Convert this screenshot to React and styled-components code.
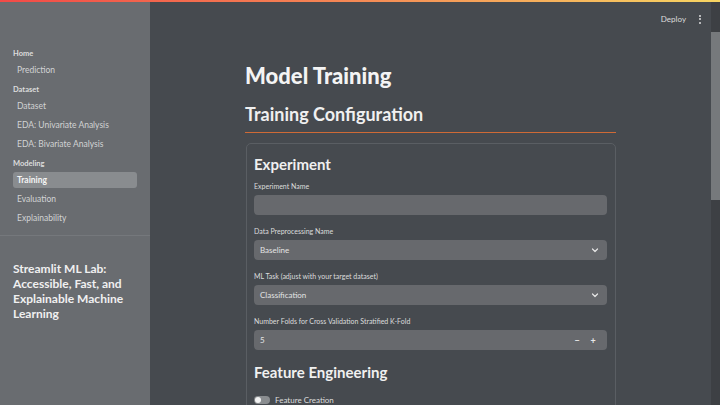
import React from "react";
import styled, { createGlobalStyle } from "styled-components";

const GlobalStyle = createGlobalStyle`
  html, body {
    margin: 0;
    padding: 0;
    background: #464a4f;
  }
  * {
    box-sizing: border-box;
  }
`

const Page = styled.div`
  position: relative;
  width: 720px;
  height: 405px;
  display: flex;
  overflow: hidden;
  font-family: Lato, "Noto Sans", sans-serif;
  color: #eceded;
`

const TopStripe = styled.div`
  position: absolute;
  top: 0;
  left: 0;
  right: 0;
  height: 2px;
  background: linear-gradient(90deg, #f24a47 0%, #f58a55 50%, #f7d562 100%);
  z-index: 2;
`

const Sidebar = styled.aside`
  width: 150px;
  flex-shrink: 0;
  background: #696c70;
  display: flex;
  flex-direction: column;
`

const Nav = styled.nav`
  padding: 49px 13px 0;
  height: 236px;
  border-bottom: 1px solid #75787c;
  display: flex;
  flex-direction: column;
`

const NavSection = styled.div`
  font-size: 7.5px;
  font-weight: 700;
  color: #dcdddd;
  height: 10px;
  line-height: 10px;
  margin-top: ${p => (p.$first ? 0 : 4)}px;
  margin-bottom: 3px;
`

const NavItem = styled.div`
  height: 16px;
  line-height: 16px;
  margin-bottom: 3px;
  padding-left: 4px;
  font-size: 8.5px;
  border-radius: 3px;
  color: ${p => (p.$active ? "#f4f4f4" : "#d2d3d4")};
  font-weight: ${p => (p.$active ? 700 : 400)};
  background: ${p => (p.$active ? "#898c8f" : "transparent")};
`

const SideTitle = styled.div`
  padding: 25px 13px 0;
  font-size: 12px;
  font-weight: 700;
  line-height: 15px;
  color: #f0f0f0;
`

const Main = styled.main`
  position: relative;
  flex: 1;
  display: flex;
`

const Header = styled.header`
  position: absolute;
  top: 14px;
  right: 19px;
  display: flex;
  align-items: center;
  gap: 13px;
  font-size: 8px;
  color: #dcdddd;
`

const Dots = styled.span`
  display: flex;
  flex-direction: column;
  gap: 1.5px;
  & > i {
    width: 2px;
    height: 2px;
    border-radius: 50%;
    background: #dcdddd;
  }
`

const Content = styled.div`
  flex: 1;
  display: flex;
  justify-content: center;
`

const Column = styled.div`
  width: 371px;
  padding-top: 62px;
`

const Title = styled.h1`
  margin: 0;
  font-size: 22px;
  font-weight: 900;
  line-height: 28px;
  color: #f4f4f4;
`

const Subtitle = styled.h2`
  margin: 13px 0 0;
  font-size: 18px;
  font-weight: 700;
  line-height: 22px;
  padding-bottom: 7px;
  border-bottom: 1px solid #cf6a36;
  color: #f0f0f0;
`

const Card = styled.section`
  margin-top: 10px;
  margin-left: 1px;
  border: 1px solid #5a5e63;
  border-radius: 5px;
  padding: 10px 8px 0 7px;
  height: 300px;
`

const CardHeading = styled.h3`
  margin: 0 0 8px;
  font-size: 15px;
  font-weight: 700;
  line-height: 20px;
  color: #f0f0f0;
`

const Field = styled.div`
  margin-bottom: 12px;
`

const Label = styled.div`
  font-size: 7px;
  line-height: 9px;
  color: #dcdddd;
  margin-bottom: 4px;
`

const InputBox = styled.div`
  height: 20px;
  border-radius: 4px;
  background: #67696d;
  display: flex;
  align-items: center;
  padding: 0 6px;
  font-size: 8px;
  color: #e4e4e4;
`

const Value = styled.span`
  flex: 1;
`

const Chevron = styled.svg`
  width: 8px;
  height: 8px;
  margin-right: 2px;
`

const Step = styled.span`
  width: 16px;
  text-align: center;
  font-size: 9px;
  font-weight: 700;
  color: #e8e8e8;
`

const SectionHeading = styled.h3`
  margin: 10px 0 0;
  font-size: 15px;
  font-weight: 700;
  line-height: 20px;
  color: #f0f0f0;
`

const ToggleRow = styled.div`
  display: flex;
  align-items: center;
  gap: 5px;
  margin-top: 13px;
  font-size: 8px;
  color: #dcdddd;
`

const Toggle = styled.span`
  width: 16px;
  height: 8px;
  border-radius: 4px;
  background: #8a8d90;
  display: flex;
  align-items: center;
  padding: 1px;
  & > i {
    width: 6px;
    height: 6px;
    border-radius: 50%;
    background: #f2f2f2;
  }
`

const Scrollbar = styled.div`
  width: 9px;
  flex-shrink: 0;
  padding-top: 32px;
  display: flex;
  flex-direction: column;
  background: #3d4044;
`

const Thumb = styled.div`
  height: 168px;
  background: #76797c;
`

const ChevronDown = () => (
  <Chevron viewBox="0 0 8 8" fill="none" stroke="#e6e6e6" strokeWidth="1.2" strokeLinecap="round" strokeLinejoin="round">
    <path d="M1.5 3l2.5 2.5L6.5 3" />
  </Chevron>
)

const nav = [
  { section: "Home", items: ["Prediction"] },
  { section: "Dataset", items: ["Dataset", "EDA: Univariate Analysis", "EDA: Bivariate Analysis"] },
  { section: "Modeling", items: ["Training", "Evaluation", "Explainability"] },
]

export default function App() {
  return (
    <Page>
      <GlobalStyle />
      <TopStripe />
      <Sidebar>
        <Nav>
          {nav.map((group, i) => (
            <React.Fragment key={group.section}>
              <NavSection $first={i === 0}>{group.section}</NavSection>
              {group.items.map(item => (
                <NavItem key={item} $active={item === "Training"}>{item}</NavItem>
              ))}
            </React.Fragment>
          ))}
        </Nav>
        <SideTitle>
          Streamlit ML Lab: Accessible, Fast, and Explainable Machine Learning
        </SideTitle>
      </Sidebar>
      <Main>
        <Header>
          <span>Deploy</span>
          <Dots><i /><i /><i /></Dots>
        </Header>
        <Content>
          <Column>
            <Title>Model Training</Title>
            <Subtitle>Training Configuration</Subtitle>
            <Card>
              <CardHeading>Experiment</CardHeading>
              <Field>
                <Label>Experiment Name</Label>
                <InputBox />
              </Field>
              <Field>
                <Label>Data Preprocessing Name</Label>
                <InputBox><Value>Baseline</Value><ChevronDown /></InputBox>
              </Field>
              <Field>
                <Label>ML Task (adjust with your target dataset)</Label>
                <InputBox><Value>Classification</Value><ChevronDown /></InputBox>
              </Field>
              <Field>
                <Label>Number Folds for Cross Validation Stratified K-Fold</Label>
                <InputBox>
                  <Value>5</Value>
                  <Step>−</Step>
                  <Step>+</Step>
                </InputBox>
              </Field>
              <SectionHeading>Feature Engineering</SectionHeading>
              <ToggleRow>
                <Toggle><i /></Toggle>
                Feature Creation
              </ToggleRow>
            </Card>
          </Column>
        </Content>
        <Scrollbar>
          <Thumb />
        </Scrollbar>
      </Main>
    </Page>
  )
}
